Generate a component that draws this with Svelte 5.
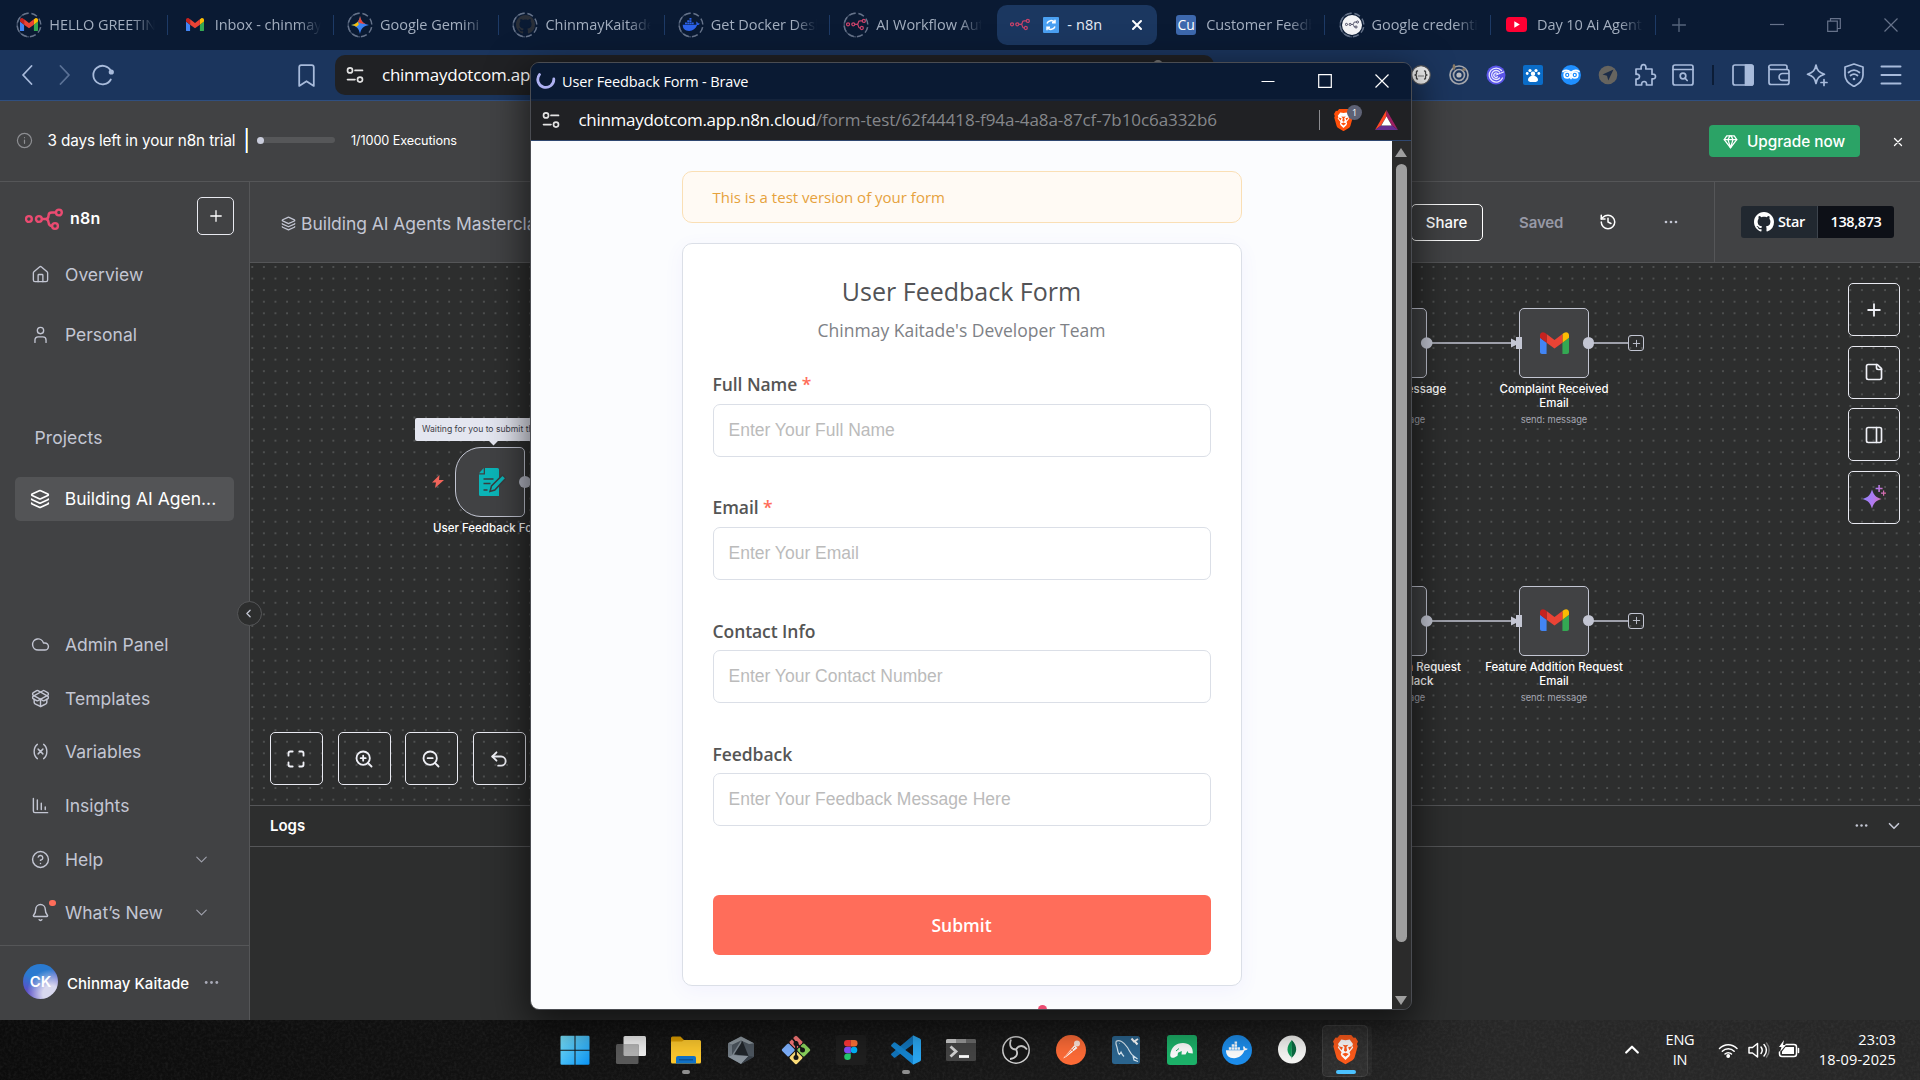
<script>
  const icons = {
    house: '<path d="M15 21v-8a1 1 0 0 0-1-1h-4a1 1 0 0 0-1 1v8"/><path d="M3 10a2 2 0 0 1 .709-1.528l7-5.999a2 2 0 0 1 2.582 0l7 5.999A2 2 0 0 1 21 10v9a2 2 0 0 1-2 2H5a2 2 0 0 1-2-2z"/>',
    user: '<path d="M19 22v-3a4 4 0 0 0-4-4H9a4 4 0 0 0-4 4v3"/><circle cx="12" cy="7" r="4"/>',
    layers: '<path d="M12.83 2.18a2 2 0 0 0-1.66 0L2.6 6.08a1 1 0 0 0 0 1.83l8.58 3.91a2 2 0 0 0 1.66 0l8.58-3.9a1 1 0 0 0 0-1.83z"/><path d="M2 12a1 1 0 0 0 .58.91l8.6 3.91a2 2 0 0 0 1.65 0l8.58-3.9A1 1 0 0 0 22 12"/><path d="M2 17a1 1 0 0 0 .58.91l8.6 3.91a2 2 0 0 0 1.65 0l8.58-3.9A1 1 0 0 0 22 17"/>',
    cloud: '<path d="M17.5 19H9a7 7 0 1 1 6.71-9h1.79a4.5 4.5 0 1 1 0 9Z"/>',
    box: '<path d="M12 22v-9"/><path d="M15.17 2.21a1.67 1.67 0 0 1 1.63 0L21 4.57a1.93 1.93 0 0 1 0 3.36L8.82 14.79a1.655 1.655 0 0 1-1.64 0L3 12.43a1.93 1.93 0 0 1 0-3.36z"/><path d="M20 13v3.87a2.06 2.06 0 0 1-1.11 1.83l-6 3.08a1.93 1.93 0 0 1-1.78 0l-6-3.08A2.06 2.06 0 0 1 4 16.87V13"/><path d="M21 12.43a1.93 1.93 0 0 0 0-3.36L8.83 2.2a1.64 1.64 0 0 0-1.63 0L3 4.57a1.93 1.93 0 0 0 0 3.36l12.18 6.86a1.636 1.636 0 0 0 1.63 0z"/>',
    variable: '<path d="M8 21s-4-3-4-9 4-9 4-9M16 3s4 3 4 9-4 9-4 9M15 9l-6 6M9 9l6 6"/>',
    chart: '<path d="M13 17V9M18 17v-3M3 3v16a2 2 0 0 0 2 2h16M8 17V5"/>',
    help: '<circle cx="12" cy="12" r="10"/><path d="M9.09 9a3 3 0 0 1 5.83 1c0 2-3 3-3 3M12 17h.01"/>',
    bell: '<path d="M10.268 21a2 2 0 0 0 3.464 0"/><path d="M3.262 15.326A1 1 0 0 0 4 17h16a1 1 0 0 0 .74-1.673C19.41 13.956 18 12.499 18 8A6 6 0 0 0 6 8c0 4.499-1.411 5.956-2.738 7.326"/>',
    down: '<path d="m6 9 6 6 6-6"/>',
    up: '<path d="m5 15 7-7 7 7"/>',
    left: '<path d="m15 18-6-6 6-6"/>',
    info: '<circle cx="12" cy="12" r="10"/><path d="M12 16v-4.5M12 8h.01"/>',
    plus: '<path d="M5 12h14M12 5v14"/>',
    close: '<path d="M18 6 6 18M6 6l12 12"/>',
    fit: '<path d="M8 3H5a2 2 0 0 0-2 2v3M21 8V5a2 2 0 0 0-2-2h-3M3 16v3a2 2 0 0 0 2 2h3M16 21h3a2 2 0 0 0 2-2v-3"/>',
    zoomIn: '<circle cx="11" cy="11" r="8"/><path d="m21 21-4.35-4.35M11 8v6M8 11h6"/>',
    zoomOut: '<circle cx="11" cy="11" r="8"/><path d="m21 21-4.35-4.35M8 11h6"/>',
    undo: '<path d="M9 14 4 9l5-5"/><path d="M4 9h10.5a5.5 5.5 0 0 1 0 11H11"/>',
    note: '<path d="M16 3H5a2 2 0 0 0-2 2v14a2 2 0 0 0 2 2h14a2 2 0 0 0 2-2V8Z"/><path d="M15 3v4a2 2 0 0 0 2 2h4"/>',
    panel: '<rect x="3" y="3" width="18" height="18" rx="2"/><path d="M15 3v18"/>',
    history: '<path d="M3 12a9 9 0 1 0 9-9 9.75 9.75 0 0 0-6.74 2.74L3 8"/><path d="M3 3v5h5M12 7v5l4 2"/>',
    gem: '<path d="M6 3h12l4 6-10 13L2 9Z"/><path d="M11 3 8 9l4 13 4-13-3-6M2 9h20"/>',
    dots: '<g fill="currentColor" stroke="none"><circle cx="4.5" cy="12" r="2"/><circle cx="12" cy="12" r="2"/><circle cx="19.5" cy="12" r="2"/></g>',
    bookmark: '<path d="m19 22-7-4.500-7 4.500V4a2 2 0 0 1 2-2h10a2 2 0 0 1 2 2z"/>',
    tune: '<circle cx="6" cy="6.500" r="3"/><path d="M12 6.500h9M3 17.500h9"/><circle cx="18" cy="17.500" r="3"/>'
  };

  const tabs = [
    { title: 'HELLO GREETINGS', icon: 'gmail', ring: true },
    { title: 'Inbox - chinmaykaitade', icon: 'gmail' },
    { title: 'Google Gemini', icon: 'gemini', ring: true },
    { title: 'ChinmayKaitade/Docker', icon: 'github', ring: true },
    { title: 'Get Docker Desktop', icon: 'docker', ring: true },
    { title: 'AI Workflow Automation', icon: 'n8n', ring: true, last: true },
    { title: '- n8n', icon: 'n8n', active: true },
    { title: 'Customer Feedback', icon: 'cu' },
    { title: 'Google credentials', icon: 'n8nwhite', ring: true },
    { title: 'Day 10 Ai Agents', icon: 'youtube' }
  ];

  const mainNav = [
    { label: 'Overview', icon: 'house' },
    { label: 'Personal', icon: 'user' }
  ];
  const footNav = [
    { label: 'Admin Panel', icon: 'cloud' },
    { label: 'Templates', icon: 'box' },
    { label: 'Variables', icon: 'variable' },
    { label: 'Insights', icon: 'chart' },
    { label: 'Help', icon: 'help', more: true },
    { label: 'What’s New', icon: 'bell', more: true, dot: true }
  ];

  const fields = [
    { label: 'Full Name', hint: 'Enter Your Full Name', required: true },
    { label: 'Email', hint: 'Enter Your Email', required: true },
    { label: 'Contact Info', hint: 'Enter Your Contact Number' },
    { label: 'Feedback', hint: 'Enter Your Feedback Message Here' }
  ];

  const extensions = ['braces', 'target', 'spiral', 'paw', 'owl', 'plane', 'puzzle', 'search', 'bar', 'sidebar', 'wallet', 'spark', 'vpn', 'menu'];

  const apps = [
    { icon: 'windows' }, { icon: 'taskview' }, { icon: 'explorer', open: true }, { icon: 'cube' },
    { icon: 'git' }, { icon: 'figma' }, { icon: 'vscode', open: true }, { icon: 'terminal' },
    { icon: 'obs' }, { icon: 'postman' }, { icon: 'mysql' }, { icon: 'manatee' },
    { icon: 'docker' }, { icon: 'mongo' }, { icon: 'brave', current: true }
  ];
</script>

{#snippet icon(name, size = 20, stroke = 2)}
  <svg width={size} height={size} viewBox="0 0 24 24" fill="none" stroke="currentColor" stroke-width={stroke} stroke-linecap="round" stroke-linejoin="round">{@html icons[name]}</svg>
{/snippet}

{#snippet gmail(w)}
  <svg width={w} height={w * 0.76} viewBox="52 42 88 66">
    <path fill="#4285f4" d="M58 108h14V74L52 59v43c0 3.320 2.690 6 6 6" />
    <path fill="#34a853" d="M120 108h14c3.320 0 6-2.690 6-6V59l-20 15" />
    <path fill="#fbbc04" d="M120 48v26l20-15v-8c0-7.420-8.470-11.650-14.400-7.200" />
    <path fill="#ea4335" d="M72 74V48l24 18 24-18v26L96 92" />
    <path fill="#c5221f" d="M52 51v8l20 15V48l-5.600-4.200c-5.940-4.450-14.400-.22-14.400 7.200" />
  </svg>
{/snippet}

{#snippet n8n(w, color = '#ea4b71')}
  <svg width={w} height={w * 0.632} viewBox="0 0 38 24" fill="none" stroke={color} stroke-width="2.400">
    <circle cx="3.900" cy="12" r="2.900" /><circle cx="13.900" cy="12" r="2.900" />
    <circle cx="33.900" cy="5.500" r="2.900" /><circle cx="30" cy="19" r="2.900" />
    <path d="M16.800 12h3.700c2.600 0 3-1.500 3-3.300s.9-3.200 3.300-3.200h4.200M20.500 12c2.400 0 2.900 1.400 3.100 3.600s1 3.400 3.500 3.400" />
  </svg>
{/snippet}

{#snippet github(size)}
  <svg width={size} height={size} viewBox="0 0 16 16" fill="currentColor"><path d="M8 0C3.580 0 0 3.580 0 8c0 3.540 2.290 6.530 5.470 7.590.4.070.55-.17.55-.38 0-.19-.01-.82-.01-1.490-2.010.37-2.530-.49-2.690-.94-.09-.23-.48-.94-.82-1.130-.28-.15-.68-.52-.01-.53.63-.01 1.080.58 1.230.82.72 1.210 1.870.87 2.330.66.070-.52.28-.87.51-1.070-1.780-.2-3.640-.89-3.640-3.950 0-.87.31-1.590.82-2.150-.08-.2-.36-1.020.08-2.120 0 0 .67-.21 2.200.82.64-.18 1.320-.27 2-.27s1.360.09 2 .27c1.530-1.040 2.200-.82 2.200-.82.44 1.100.16 1.920.08 2.120.51.56.82 1.270.82 2.150 0 3.070-1.870 3.750-3.650 3.950.29.25.54.73.54 1.480 0 1.070-.01 1.930-.01 2.200 0 .21.15.46.55.38A8.010 8.010 0 0 0 16 8c0-4.420-3.580-8-8-8z" /></svg>
{/snippet}

{#snippet whale(w, color)}
  <svg width={w} height={w} viewBox="0 0 24 24" fill={color}>
    <path d="M4 8.500h2.600v2.600H4zM7 8.500h2.600v2.600H7zM10 8.500h2.600v2.600H10zM7 5.500h2.600v2.500H7zM10 5.500h2.600v2.500H10zM13 8.500h2.600v2.600H13zM10 2.500h2.600V5H10z" />
    <path d="M1 11.700h16.300c1.100 0 1.900-.4 2.200-.8-.8-1.200-.7-2.500 0-3.500 1 .6 1.500 1.500 1.600 2.300.9-.1 2 .1 2.600.6-.6 1.200-1.900 1.800-3.400 1.800-2 5-5.700 7.900-10.800 7.900C4 20 1 17 1 11.700z" />
  </svg>
{/snippet}

{#snippet lion(w)}
  <svg width={w} height={w * 1.17} viewBox="0 0 24 28">
    <path fill="#ff4f0a" d="M6.500 0h11l2.300 2.600 1.800-.3 2.400 3.900-1 2.500.7 2-3 10.800c-.4 1.200-1.100 2-2 2.600L12 28l-6.700-3.900c-.9-.6-1.600-1.400-2-2.600L.3 10.700l.7-2L0 6.200l2.400-3.900 1.800.3z" />
    <path fill="#fff" d="M8 4.300 12 5l4-.7 3.200 4.200-.7 1.700.9 1.800-3.600 4.400.8 2-.9 2L12 24l-3.700-3.600-.9-2 .8-2L4.600 12l.9-1.800-.7-1.700z" />
    <path fill="#ff4f0a" d="m5.300 10.800 4.200.9-1.300 2.800zM18.700 10.800l-4.200.9 1.300 2.800zM12 16l-1.500-1 .6-3.500-1.900-2.200 2.800.5 2.800-.5-1.900 2.200.6 3.500zM8.800 18.300l3.200-1.200 3.200 1.200L12 20.800z" />
  </svg>
{/snippet}

{#snippet favicon(name)}
  {#if name === 'gmail'}{@render gmail(18)}
  {:else if name === 'gemini'}
    <svg width="18" height="18" viewBox="0 0 24 24">
      <defs><linearGradient id="gem" x1="0" y1="0" x2="1" y2="1"><stop offset=".15" stop-color="#2fa84f" /><stop offset=".45" stop-color="#3a86f7" /><stop offset="1" stop-color="#3a78f2" /></linearGradient></defs>
      <path fill="url(#gem)" d="M12 0c1 7 5 11 12 12-7 1-11 5-12 12-1-7-5-11-12-12C7 11 11 7 12 0z" />
      <path fill="#ea4335" d="M12 0c1 5.500 3.500 9.300 8 11L12 9.500 9.300 7.600C10.700 5.600 11.600 3 12 0z" />
      <path fill="#fbbc04" d="M0 12c4-.6 7-2.200 9-4.500l1.500 4.200L7 14.200C5 13 3 12.400 0 12z" />
    </svg>
  {:else if name === 'github'}<span class="dim-git">{@render github(19)}</span>
  {:else if name === 'docker'}{@render whale(18, '#2c62ea')}
  {:else if name === 'n8n'}{@render n8n(20, '#c9426a')}
  {:else if name === 'n8nwhite'}<span class="white-disc">{@render n8n(14, '#3b3b55')}</span>
  {:else if name === 'cu'}<span class="cu">Cu</span>
  {:else if name === 'youtube'}
    <svg width="21" height="15" viewBox="0 0 21 15"><rect width="21" height="15" rx="3.500" fill="#ff0033" /><path d="m8.300 4.300 5.500 3.200-5.500 3.200z" fill="#fff" /></svg>
  {/if}
{/snippet}

{#snippet extension(name)}
  {#if name === 'bar'}<span class="ext-bar"></span>
  {:else}
    <svg width="24" height="24" viewBox="0 0 24 24" fill="none" stroke="#a8bbdb" stroke-width="1.700" stroke-linejoin="round" stroke-linecap="round">
      {#if name === 'braces'}
        <circle cx="12" cy="12" r="9.300" fill="#f4f4f4" stroke="#55565a" stroke-width="1.200" /><path stroke="#444" stroke-width="1.300" d="M8.500 8c-1.500 0-1 1.200-1 2.200S6.500 12 6 12c.5 0 1.500.8 1.500 1.800S7 16 8.500 16M15.500 8c1.500 0 1 1.200 1 2.200s1 1.800 1.500 1.800c-.5 0-1.500.8-1.500 1.800S17 16 15.500 16M10 13h.01M12 13h.01M14 13h.01" />
      {:else if name === 'target'}
        <circle cx="12" cy="12" r="9" stroke="#a4a6ac" /><circle cx="12" cy="12" r="5.500" stroke="#a4a6ac" /><circle cx="12" cy="12" r="2.600" fill="#b9bbc0" stroke="none" /><path stroke="#8a7b66" stroke-width="2.500" d="M7 2.500v3M16.500 6.500h1" />
      {:else if name === 'spiral'}
        <circle cx="12" cy="12" r="9.500" fill="#5a55e8" stroke="none" /><path stroke="#e6e6ff" stroke-width="1.300" d="M17.500 7.500A7 7 0 1 0 18.500 15M15.500 9A4.500 4.500 0 1 0 15.500 15M13.500 10.500a2.200 2.200 0 1 0 0 3.300M12 12l7.500-3" />
      {:else if name === 'paw'}
        <rect x="2" y="2" width="20" height="20" rx="2" fill="#0a6cc8" stroke="none" /><g fill="#fff" stroke="none"><circle cx="9" cy="7.500" r="1.600" /><circle cx="15" cy="7.500" r="1.600" /><circle cx="6.200" cy="10.500" r="1.400" /><circle cx="17.800" cy="10.500" r="1.400" /><circle cx="12" cy="10.800" r="2.200" /><path d="M12 12.800c3 0 5 2 5 4 0 2.600-3 2.200-5 2.200s-5 .4-5-2.200c0-2 2-4 5-4z" /></g>
      {:else if name === 'owl'}
        <circle cx="12" cy="12" r="10" fill="#1f8fff" stroke="none" /><g stroke="#fff"><circle cx="8.200" cy="12" r="3" /><circle cx="15.800" cy="12" r="3" /><path d="M4 8.500c3-2 5.500-1 8 1 2.500-2 5-3 8-1M12 12v3.500" /></g><path fill="#fff" stroke="none" d="M7.500 11h1.500v2H7.500zM15 11h1.500v2H15z" />
      {:else if name === 'plane'}
        <circle cx="12" cy="12" r="9.300" fill="#66645f" stroke="none" /><path fill="#1c2c48" stroke="none" d="M17.500 6.500 6.500 11.500l4.500 1.200 1.300 4.800z" />
      {:else if name === 'puzzle'}
        <path d="M3 6h5.200c-.6-3 .6-4.300 2.300-4.300S13.400 3 12.800 6H19v5.200c2.500-.3 3.500.8 3.500 2.300S21.500 16.200 19 15.800V22h-5.500c.3-2.500-.8-3.500-2.300-3.500S8.300 19.500 8.700 22H3v-6c2.300.3 3.500-.8 3.500-2.400S5.300 10.900 3 11.300z" />
      {:else if name === 'search'}
        <rect x="2" y="2" width="20" height="20" rx="2" /><path d="M2 6.500h20" /><circle cx="12" cy="13" r="2.800" /><path d="m14 15.200 2.200 2.300" />
      {:else if name === 'sidebar'}
        <rect x="2" y="2" width="20" height="20" rx="2" /><path fill="#a8bbdb" d="M14.500 2H20a2 2 0 0 1 2 2v16a2 2 0 0 1-2 2h-5.500z" />
      {:else if name === 'wallet'}
        <path d="M20 6.500V4a2 2 0 0 0-2-2H4a2 2 0 0 0 0 4.500h16a2 2 0 0 1 2 2v11a2 2 0 0 1-2 2H4a2 2 0 0 1-2-2V4M22 10.500h-6.500a3.400 3.400 0 0 0 0 6.800H22z" />
      {:else if name === 'spark'}
        <path d="M11 2c1 5.500 3 7.500 8.500 9.200C14 13 12 15 11 20.500 10 15 8 13 2.500 11.200 8 9.500 10 7.500 11 2zM19 16.500v6M16 19.500h6" />
      {:else if name === 'vpn'}
        <path d="m12 1 9 3v8c0 5-4 9-9 11.500C7 21 3 17 3 12V4z" /><path d="M6.500 9.500c3.500-3 7.500-3 11 0M8.500 12.500c2.200-1.800 4.800-1.800 7 0" /><circle cx="12" cy="16" r="1.300" fill="#a8bbdb" stroke="none" />
      {:else}
        <path stroke-width="2" d="M2.500 3.500h19M2.500 12h19M2.500 20.500h19" />
      {/if}
    </svg>
  {/if}
{/snippet}

{#snippet appIcon(name)}
  <svg width="30" height="30" viewBox="0 0 30 30">
    {#if name === 'windows'}
      <defs><linearGradient id="win" x1="0" y1="0" x2="1" y2="1"><stop offset="0" stop-color="#7fe8ff" /><stop offset="1" stop-color="#0a94f5" /></linearGradient></defs>
      <path fill="url(#win)" d="M.5 2a1.200 1.200 0 0 1 1.200-1.200H14.500v14H.5zM15.500.8h12.800A1.200 1.200 0 0 1 29.500 2v12.800h-14zM.5 15.800h14v14H1.700A1.200 1.200 0 0 1 .5 28.600zM15.500 15.800h14v12.800a1.200 1.200 0 0 1-1.200 1.200H15.500z" />
    {:else if name === 'taskview'}
      <rect x="7.500" y="1" width="22.500" height="20" rx="1.500" fill="#f2f2f2" /><rect x="0" y="9" width="22.500" height="20" rx="1.500" fill="#5a5a5a" /><path fill="#b5b5b5" d="M7.500 9h15v12h-13.500a1.500 1.500 0 0 1-1.500-1.500z" />
    {:else if name === 'explorer'}
      <path fill="#e2a100" d="M0 3a1.500 1.500 0 0 1 1.500-1.500h8L13 5h16v10H0z" /><path fill="#ffca2e" d="M0 6.500h11L13 5h15.500A1.500 1.500 0 0 1 30 6.500v20.500a1.500 1.500 0 0 1-1.500 1.500h-27A1.500 1.500 0 0 1 0 27z" /><path fill="#1173c9" d="M5 28.500v-5.500a2 2 0 0 1 2-2h16a2 2 0 0 1 2 2v5.500z" /><path d="M8 24.800h14" stroke="#0a4d8f" stroke-width="1.200" />
    {:else if name === 'cube'}
      <path fill="#4d565f" d="M15 1.500 28 8.200v13.500L15 29 2 21.700V8.200z" /><path fill="#8e989f" d="M15 1.500 2 8.200l4 1.500L15 5.500l8 3.500 5-.8z" /><path fill="#737d86" d="M2 8.200 6 9.700V20l-4 1.700z" /><path fill="#7f8991" d="M15 5.500 6 20l3 1 8-3z" /><path fill="#20252a" d="m16.500 6 6 15L8 19.500z" /><path fill="#8a949d" d="m2 21.700 4-1.700 16.500 1L15 29z" /><path fill="#39414a" d="m22.500 21 5.500.7L15 29z" />
    {:else if name === 'git'}
      <g transform="rotate(45 15 15)"><rect x="4.500" y="4.500" width="10" height="10" rx="1.500" fill="#ff7b7b" /><rect x="15.500" y="4.500" width="10" height="10" rx="1.500" fill="#8bd45c" /><rect x="4.500" y="15.500" width="10" height="10" rx="1.500" fill="#7fb2ff" /><rect x="15.500" y="15.500" width="10" height="10" rx="1.500" fill="#ffe07a" /></g>
      <path stroke="#161616" stroke-width="1.800" fill="none" d="M15 6v17M11 3l4 5 6 6" /><circle cx="15" cy="22.500" r="2.500" fill="#161616" /><circle cx="21.500" cy="15" r="2.500" fill="#161616" /><circle cx="15" cy="8.500" r="2.500" fill="#161616" />
    {:else if name === 'figma'}
      <rect width="30" height="30" rx="3" fill="#1f1f1f" /><path fill="#ff3737" d="M14.800 5H11.300a3.200 3.200 0 0 0 0 6.500h3.500z" /><path fill="#ff7237" d="M14.800 5h3.500a3.200 3.200 0 0 1 0 6.500h-3.500z" /><path fill="#874fff" d="M14.800 11.700h-3.500a3.200 3.200 0 0 0 0 6.500h3.500z" /><circle cx="18" cy="15" r="3.300" fill="#00b6ff" /><path fill="#24cb71" d="M14.800 18.400h-3.500a3.300 3.300 0 1 0 3.500 3.300z" />
    {:else if name === 'vscode'}
      <path fill="#1276bd" d="M22 .5v8.700L4.300 22.400a1.200 1.200 0 0 1-1.500 0L.5 20.300a1.200 1.200 0 0 1 0-1.700z" /><path fill="#1585d0" d="M22 29.500v-8.700L4.300 7.600a1.200 1.200 0 0 0-1.500 0L.5 9.700a1.200 1.200 0 0 0 0 1.700z" /><path fill="#2aa7f2" d="m22 .3 6.800 3.200a2 2 0 0 1 1.200 1.800v19.400a2 2 0 0 1-1.200 1.800L22 29.700z" />
    {:else if name === 'terminal'}
      <rect y="4" width="30" height="22" rx="1.500" fill="#454545" /><path fill="#cfcfcf" d="M1.500 4H10v4H0V5.500A1.500 1.500 0 0 1 1.500 4z" /><path fill="#999" d="M10 4h10v4H10z" /><path fill="#6c6c6c" d="M20 4h8.500A1.500 1.500 0 0 1 30 5.500V8H20z" /><path d="m4.500 11.500 5.500 5-5.500 5" fill="none" stroke="#d5d5d5" stroke-width="2.800" /><path d="M13 21.500h10" stroke="#fff" stroke-width="2.800" />
    {:else if name === 'obs'}
      <circle cx="15" cy="15" r="13.200" fill="#161616" stroke="#d2d2d2" stroke-width="1.500" /><path d="M15 14.500c-5.500 0-7-4.500-5-10M15 14.500c2.500-4.800 7.500-4.500 11 0M15 14.500c3 5-.5 9-6 9.500" fill="none" stroke="#d2d2d2" stroke-width="1.800" />
    {:else if name === 'postman'}
      <circle cx="15" cy="15" r="15" fill="#ff6c37" /><path d="M7 23.500 18.500 10l3 3L10 22z" fill="#fff" /><circle cx="21" cy="8.500" r="3" fill="#ffe6dc" /><path d="m9 21.500 10-9.500" stroke="#ff6c37" stroke-width=".9" /><path d="m14.500 14 3.500 3" stroke="#ff6c37" stroke-width=".9" />
    {:else if name === 'mysql'}
      <rect x="1" y="1" width="28" height="28" rx="2.500" fill="#2c6690" /><path d="M5 6.500C8 4 13 7 16.500 12.500c2 3.200 3 6.500 6 8.500l4 3M5 6.500c-.5 3 1 4.500 1.500 8 .5 2 .5 4 2 5l1.500-2.500c1 2.500 2 3.500 3 4.500M22 21l1 4 4 1.500M8.500 8.500h.5" fill="none" stroke="#d8e8f2" stroke-width="1.200" /><path d="m20.500 3.500 2.500 3 4-2.500M23.500 6l3 3.500" stroke="#fff" stroke-width="2" fill="none" />
    {:else if name === 'manatee'}
      <rect width="30" height="30" rx="3" fill="#1db36a" /><path fill="#fff" d="M3.200 20C4 12 9 8 16 8c6 0 10.300 4 9.800 10.500l-4.300-.5-1-2-2 3.500h-4l.3-3.500-3.800 1.800-.5 3-3.500 1.900c-1.700.5-3.900-.3-3.800-2.700z" /><path d="m9 16 3-2.500" stroke="#1db36a" />
    {:else if name === 'docker'}
      <circle cx="15" cy="15" r="15" fill="#1d8fee" />
    {:else if name === 'mongo'}
      <circle cx="15" cy="14.500" r="14" fill="#f7f7f5" /><path fill="#0f9d58" d="M15 5c-6.500 7-5.500 13-.3 17.500z" /><path fill="#0a6b42" d="M14.800 5c6.500 7 5.200 13 .2 17.500l-.3 2z" />
    {/if}
  </svg>
  {#if name === 'docker'}<span class="overlay">{@render whale(23, '#fff')}</span>{/if}
{/snippet}

{#snippet flowNode(row, name1, name2, prev1, prev2)}
  <div class="flow" class:second={row === 2}>
    <div class="box cut"></div>
    <div class="label prev"><b>{prev1}</b><b>{prev2}</b><small>send: message</small></div>
    <svg class="wire" width="230" height="20" viewBox="0 0 230 20">
      <path d="M16 10h87M178 10h40" stroke="#c3c6d3" stroke-width="1.600" />
      <path d="M101 5.500 110 10l-9 4.500z" fill="#c3c6d3" />
      <circle cx="16.700" cy="10" r="5.800" fill="#c3c6d3" />
    </svg>
    <div class="box">{@render gmail(29)}</div>
    <span class="port"></span>
    <span class="add">{@render icon('plus', 11, 2)}</span>
    <span class="knob"></span>
    <div class="label"><b>{name1}</b><b>{name2}</b><small>send: message</small></div>
  </div>
{/snippet}

<div class="screen">
  <div class="tabbar">
    {#each tabs as t}
      <div class="tab" class:active={t.active} class:sep={!t.active && !t.last}>
        <span class="fav" class:ring={t.ring}>
          {#if t.ring}<svg class="dash" width="26" height="26" viewBox="0 0 26 26"><circle cx="13" cy="13" r="11.800" fill="none" stroke="#66738a" stroke-width="1.500" stroke-dasharray="6.200 3.070" transform="rotate(10 13 13)" /><path d="M13 1.200A11.800 11.800 0 0 0 13 24.800" fill="none" stroke="#66738a" stroke-width="1.300" opacity=".6" /></svg>{/if}
          {@render favicon(t.icon)}
        </span>
        {#if t.active}
          <svg class="sync" width="16" height="16" viewBox="0 0 16 16"><rect width="16" height="16" rx="1" fill="#4aa0f2" /><path d="M4 6.500A4.200 4.200 0 0 1 11.500 5.500M12 9.500A4.200 4.200 0 0 1 4.500 10.500M12 2.800v3H9M4 13.200v-3h3" stroke="#fff" stroke-width="1.500" fill="none" /></svg>
          <span class="now">{t.title}</span>
          <span class="x">{@render icon('close', 16, 3)}</span>
        {:else}
          <span class="title">{t.title}</span>
        {/if}
      </div>
    {/each}
    <span class="newtab">{@render icon('plus', 22, 1.5)}</span>
    <div class="winctl">
      <svg width="14" height="14" viewBox="0 0 14 14"><path d="M0 6.500h14" /></svg>
      <svg width="14" height="14" viewBox="0 0 14 14"><path d="M.7 3.200h9.600v10.100H.7zM3.500 3V.7h9.800v9.800h-2.500" /></svg>
      <svg width="14" height="14" viewBox="0 0 14 14"><path d="m.5.5 13 13M13.500.5l-13 13" /></svg>
    </div>
  </div>

  <div class="toolbar">
    <div class="nav">
      <svg width="12" height="20" viewBox="0 0 12 20"><path d="M10.500 1 2 10l8.500 9" /></svg>
      <svg class="off" width="12" height="20" viewBox="0 0 12 20"><path d="m1.500 1 8.500 9-8.500 9" /></svg>
      <svg width="24" height="22" viewBox="0 0 24 22"><path d="M19.800 15.500A9.300 9.300 0 1 1 20 7" /><circle cx="20.300" cy="8" r="1.700" fill="#a8bbdb" /></svg>
    </div>
    <span class="mark">{@render icon('bookmark', 25, 1.7)}</span>
    <div class="omnibox">
      {@render icon('tune', 20, 2)}
      <span class="url">chinmaydotcom.app</span>
      <span class="bubble"></span>
    </div>
    <div class="exts">
      {#each extensions as e}<span class="ext">{@render extension(e)}</span>{/each}
    </div>
  </div>

  <div class="app">
    <div class="trial">
      <span class="info">{@render icon('info', 17, 1.7)}</span>
      <span class="days">3 days left in your n8n trial</span>
      <span class="caret"></span>
      <span class="meter"><i></i></span>
      <span class="exec">1/1000 Executions</span>
      <button class="upgrade">{@render icon('gem', 15, 2)}Upgrade now</button>
      <span class="dismiss">{@render icon('close', 14, 2.2)}</span>
    </div>

    <div class="body">
      <aside>
        <div class="brand"><span class="logo">{@render n8n(38)}<b>n8n</b></span><button>{@render icon('plus', 18, 1.7)}</button></div>
        <nav class="top">
          {#each mainNav as item}<div class="item">{@render icon(item.icon, 19, 1.7)}<span>{item.label}</span></div>{/each}
        </nav>
        <div class="heading">Projects</div>
        <div class="item chosen">{@render icon('layers', 20, 2)}<span>Building AI Agen...</span></div>
        <nav class="foot">
          {#each footNav as item}
            <div class="item">
              {@render icon(item.icon, 19, 1.8)}<span>{item.label}</span>
              {#if item.more}<em>{@render icon('down', 19, 1.4)}</em>{/if}
              {#if item.dot}<i class="alert"></i>{/if}
            </div>
          {/each}
        </nav>
        <div class="account"><span class="avatar">CK</span><b>Chinmay Kaitade</b><em>{@render icon('dots', 17)}</em></div>
        <span class="collapse">{@render icon('left', 13, 2.4)}</span>
      </aside>

      <main>
        <header>
          <span class="crumb">{@render icon('layers', 15, 2)}Building AI Agents Masterclass</span>
          <div class="actions">
            <button class="share">Share</button>
            <span class="saved">Saved</span>
            <span class="hist">{@render icon('history', 18, 2)}</span>
            <span class="more">{@render icon('dots', 16)}</span>
          </div>
          <div class="stars">
            <div class="badge"><span class="star">{@render github(20)}Star</span><span class="count">138,873</span></div>
          </div>
        </header>

        <div class="canvas">
          <svg class="dots" width="1671" height="542">
            <defs><pattern id="grid" width="11.580" height="11.580" patternUnits="userSpaceOnUse" x="1.300" y="3"><circle cx="1" cy="1" r=".75" fill="#7d7f7e" /></pattern></defs>
            <rect width="1671" height="542" fill="url(#grid)" />
          </svg>
          <div class="tip">Waiting for you to submit the form</div>
          <div class="trigger">
            <svg width="27" height="28" viewBox="0 0 27 28">
              <path fill="#0bb5b8" d="M6 0h12.500a1.500 1.500 0 0 1 1.500 1.500V28H1.500A1.500 1.500 0 0 1 0 26.500V6.500h6z" /><path fill="#0bb5b8" d="M4.700 0v5.200H0z" />
              <path d="M4.500 11h10M4.500 15.500h7M4.500 22h4" stroke="#3a3c3e" stroke-width="1.600" />
              <path d="m11 23.500 1.500-5.500L23.500 7l3.300 3.300L15.800 22z" fill="#0bb5b8" stroke="#3a3c3e" stroke-width="1.500" />
            </svg>
          </div>
          <span class="bolt"><svg width="12" height="13" viewBox="0 0 12 13"><path fill="#f1645a" d="M7.500 0 0 7.500h4L3 13l9-8H7z" /></svg></span>
          <span class="trigger-port"></span>
          <div class="trigger-name">User Feedback Form</div>

          {@render flowNode(1, 'Complaint Received', 'Email', 'Complaint Message', 'Slack')}
          {@render flowNode(2, 'Feature Addition Request', 'Email', 'Feature Addition Request', 'Message Slack')}

          <div class="tools">
            {#each ['fit', 'zoomIn', 'zoomOut', 'undo'] as t}<button>{@render icon(t, 20, 2.2)}</button>{/each}
          </div>
          <div class="side">
            {#each ['plus', 'note', 'panel'] as t}<button>{@render icon(t, 20, t === 'plus' ? 2.2 : 2)}</button>{/each}
            <button>
              <svg width="24" height="24" viewBox="0 0 24 24">
                <defs><linearGradient id="ai" x1="0" x2="1" y1="0" y2=".3"><stop offset="0" stop-color="#8b86ff" /><stop offset=".6" stop-color="#b07af0" /><stop offset="1" stop-color="#e06aa0" /></linearGradient></defs>
                <path fill="url(#ai)" d="M10 4.500c2 6 3.500 7.500 9.500 9.500-6 2-7.500 3.500-9.500 9.500-2-6-3.500-7.500-9.500-9.500 6-2 7.500-3.500 9.500-9.500zM16.300 0h1.600v2.700h2.700v1.600h-2.700V7h-1.600V4.300h-2.700V2.700h2.700zM21 5.500h1.200v2h2v1.200h-2v2H21v-2h-2V7.500h2z" />
              </svg>
            </button>
          </div>
        </div>

        <div class="logs"><b>Logs</b><span>{@render icon('dots', 15)}</span><span>{@render icon('down', 18, 2.2)}</span></div>
      </main>
    </div>
  </div>

  <div class="taskbar">
    <svg class="grain" width="1920" height="60"><filter id="n"><feTurbulence type="fractalNoise" baseFrequency=".35" numOctaves="2" seed="4" /><feColorMatrix values="0 0 0 0 1  0 0 0 0 1  0 0 0 0 1  .5 .3 0 0 -.32" /></filter><rect width="1920" height="60" filter="url(#n)" /></svg>
    <div class="apps">
      {#each apps as a}
        <span class="appcell" class:current={a.current} class:open={a.open}>
          {#if a.icon === 'brave'}{@render lion(25)}{:else}{@render appIcon(a.icon)}{/if}
        </span>
      {/each}
    </div>
    <div class="tray">
      <span class="chev">{@render icon('up', 20, 2.6)}</span>
      <span class="lang">ENG<br />IN</span>
      <svg class="sig" width="82" height="20" viewBox="0 0 82 20" fill="none" stroke="#fff" stroke-width="1.500" stroke-linecap="round" stroke-linejoin="round">
        <path d="M1.500 8.500c5-5 12.500-5 17.500 0M4.300 11.300c3.400-3.400 8.500-3.400 11.900 0M7 14c1.800-1.800 4.700-1.800 6.500 0" /><circle cx="10.200" cy="16" r="1.200" fill="#fff" />
        <path d="M31 7.500v5.500h3.500l5 4V3.500l-5 4zM43 7c1.500 2 1.500 4.500 0 6.500M46 4.500c3 3.500 3 8 0 11.500" /><path d="M48.500 3c3.500 4 3.500 10 0 14" opacity=".35" />
        <path d="M68 4.500h8a2.500 2.500 0 0 1 2.500 2.500v7a2.500 2.500 0 0 1-2.500 2.500H64a2.500 2.500 0 0 1-2.500-2.500v-2M80.500 8.500v4" /><path fill="#fff" stroke="none" d="M67.500 7H76v7H64v-2.500zM66 0l-5 7h2.500L62 12l6-7h-3z" />
      </svg>
      <span class="clock">23:03<br />18-09-2025</span>
    </div>
  </div>

  <div class="window">
    <div class="caption">
      <svg class="spin" width="20" height="20" viewBox="0 0 20 20"><path d="M3.500 3.500A8 8 0 1 0 17.800 8" fill="none" stroke="#aeb1f2" stroke-width="2.800" stroke-linecap="round" /></svg>
      <span class="name">User Feedback Form - Brave</span>
      <div class="ctl">
        <svg width="14" height="14" viewBox="0 0 14 14"><path d="M.5 7.500h13" /></svg>
        <svg width="14" height="14" viewBox="0 0 14 14"><path d="M.7.7h12.600v12.600H.7z" /></svg>
        <svg width="14" height="14" viewBox="0 0 14 14"><path d="m.5.5 13 13M13.500.5l-13 13" /></svg>
      </div>
    </div>
    <div class="address">
      {@render icon('tune', 20, 2)}
      <span class="full">chinmaydotcom.app.n8n.cloud<i>/form-test/62f44418-f94a-4a8a-87cf-7b10c6a332b6</i></span>
      <span class="bar"></span>
      <span class="shield">{@render lion(19)}<b>1</b></span>
      <svg width="23" height="20" viewBox="0 0 23 20"><path fill="#ff4724" d="M11.500 0v6.500L6 15.500 0 20z" /><path fill="#9e1f63" d="M11.500 0 23 20l-6-4.500-5.500-9z" /><path fill="#662d91" d="M0 20h23l-6-4.500H6z" /><path fill="#fff" d="m11.500 6.500 5.200 9H6.300z" /></svg>
    </div>
    <div class="view">
      <div class="page">
        <div class="test">This is a test version of your form</div>
        <div class="card">
          <h1>User Feedback Form</h1>
          <p>Chinmay Kaitade's Developer Team</p>
          {#each fields as f}
            <div class="field"><label for={f.label} class:plain={!f.required}>{f.label}{#if f.required}<span>{' *'}</span>{/if}</label><input id={f.label} placeholder={f.hint} /></div>
          {/each}
          <button>Submit</button>
        </div>
        <span class="pink"></span>
      </div>
      <div class="scroll"><i class="up"></i><i class="thumb"></i><i class="dn"></i></div>
    </div>
  </div>
</div>

<style>
  :global(body) { margin: 0; background: #000; overflow: hidden; }
  * { box-sizing: border-box; }
  svg { display: block; flex: none; }
  button { font: inherit; padding: 0; background: none; border: 0; color: inherit; }
  .screen { position: relative; width: 1920px; height: 1080px; overflow: hidden; display: flex; flex-direction: column; font-family: Inter, sans-serif; white-space: nowrap; }

  /* browser chrome */
  .tabbar { height: 50px; flex: none; background: #0a1a33; display: flex; align-items: center; padding-left: 3px; font: 14.500px "Open Sans", sans-serif; letter-spacing: -.05px; color: #a3aebf; }
  .tab { width: 165.400px; flex: none; height: 40px; display: flex; align-items: center; position: relative; padding: 0 0 1px 13.300px; }
  .tab.sep::after { content: ""; position: absolute; right: 0; top: 10px; width: 1px; height: 20px; background: #1d3a66; }
  .fav { width: 26px; height: 26px; flex: none; display: flex; align-items: center; justify-content: center; position: relative; }
  .dash { position: absolute; inset: 0; }
  .dim-git { color: #2a2f38; }
  .white-disc { width: 20px; height: 20px; border-radius: 50%; background: #f3f3f6; display: flex; align-items: center; justify-content: center; }
  .cu { width: 20px; height: 20px; border-radius: 3px; background: #3d68ad; color: #fff; font: 14px/20px "Open Sans", sans-serif; text-align: center; }
  .title { margin-left: 7px; width: 106px; overflow: hidden; mask-image: linear-gradient(90deg, #000 78%, transparent); }
  .tab.active { background: #1b3760; border-radius: 10px; width: 159.500px; margin: 0 3px 0 2px; padding-left: 10px; color: #e6ebf5; }
  .sync { margin-left: 10px; }
  .now { margin-left: 8px; letter-spacing: .1px; }
  .x { margin-left: auto; margin-right: 12px; color: #fff; }
  .newtab { margin-left: 12px; color: #56647c; }
  .winctl { margin-left: auto; margin-right: 22px; display: flex; gap: 43px; }
  .winctl svg { fill: none; stroke: #66728a; stroke-width: 1.200; }
  .toolbar { height: 51px; flex: none; background: #1b355d; border-bottom: 1px solid #2f4f80; display: flex; align-items: center; }
  .nav { display: flex; align-items: center; margin-left: 21px; gap: 26px; width: 274px; }
  .nav svg { fill: none; stroke: #a8bbdb; stroke-width: 1.800; stroke-linecap: round; stroke-linejoin: round; }
  .nav svg:last-child { margin-left: -6px; }
  .nav .off { opacity: .45; }
  .mark { color: #a8bbdb; margin-left: -1px; width: 41px; }
  .omnibox { width: 879px; height: 40px; border-radius: 10px; background: #202124; display: flex; align-items: center; padding-left: 10px; color: #e3e3e3; position: relative; }
  .url { margin: -1px 0 0 17px; font: 17px "Open Sans", sans-serif; letter-spacing: -.25px; color: #fff; }
  .bubble { position: absolute; left: 818px; top: 5px; width: 10px; height: 10px; border-radius: 50%; background: #777; }
  .exts { display: flex; margin-left: 188.500px; }
  .ext { width: 37.350px; display: flex; justify-content: center; align-items: center; }
  .ext:nth-child(9) { width: 23.500px; justify-content: flex-end; padding-right: 11px; }
  .ext:nth-child(10) { width: 36px; }
  .ext-bar { width: 2px; height: 20px; background: #0b1c36; }

  /* n8n */
  .app { height: 919px; flex: none; display: flex; flex-direction: column; background: #414244; color: #c3c6d3; }
  .trial { height: 81px; flex: none; border-bottom: 1px solid #555658; display: flex; align-items: center; padding: 0 0 2px 15.500px; font-size: 15px; font-weight: 500; color: #fff; }
  .info { color: #8d8e92; }
  .days { margin-left: 15px; width: 187px; font-size: 15.300px; font-weight: 400; letter-spacing: -.14px; }
  .caret { margin-left: 10.500px; width: 3px; height: 25px; background: #fff; border-left: 1px solid #3e7fd8; border-right: 1px solid #e8cd6e; }
  .meter { margin-left: 9px; width: 78px; height: 6px; border-radius: 3px; background: #565759; position: relative; }
  .meter i { position: absolute; left: 0; top: -.5px; width: 7px; height: 7px; border-radius: 50%; background: #c9ccdb; }
  .exec { margin-left: 16px; font-size: 12.700px; font-weight: 400; letter-spacing: -.12px; }
  .upgrade { margin-left: auto; width: 151px; height: 32px; background: #2ba366; border-radius: 4px; display: flex; align-items: center; justify-content: center; gap: 9px; font-weight: 500; font-size: 15.300px; position: relative; top: 1px; }
  .dismiss { margin: 3px 15.500px 0 31px; }
  .body { flex: 1; display: flex; min-height: 0; }
  aside { width: 250px; flex: none; border-right: 1px solid #555658; display: flex; flex-direction: column; position: relative; font-size: 17.500px; }
  .brand { height: 53px; margin: 0 15px 0 25px; padding-top: 15px; display: flex; align-items: center; color: #fff; }
  .logo { display: flex; align-items: center; padding-top: 6px; }
  .brand b { margin: -1px 0 0 7px; font-size: 16px; font-weight: 600; letter-spacing: .2px; }
  .brand button { margin-left: auto; width: 37px; height: 38px; border: 1px solid #e8e9f0; border-radius: 5px; display: flex; align-items: center; justify-content: center; }
  .top { margin-top: 9px; }
  .item { height: 60px; display: flex; align-items: center; padding-left: 30.500px; position: relative; }
  .item span { position: relative; margin-left: 15.500px; letter-spacing: 0; }
  .heading { margin: 63px 0 0 34.500px; height: 22px; line-height: 22px; letter-spacing: .1px; }
  .chosen { margin: 28px 15px 0; height: 44px; flex: none; background: #535456; border-radius: 5px; padding: 0 0 1px 15px; color: #fff; }
  .chosen span { margin-left: 14.800px; letter-spacing: 0; }
  .foot { margin-top: 96.500px; }
  .foot .item { height: 53.700px; }
  .item em { position: absolute; left: 192px; color: #a0a2ad; }
  .alert { position: absolute; left: 49px; top: 14px; width: 6.500px; height: 6.500px; border-radius: 50%; background: #ff6d5a; }
  .account { margin-top: auto; height: 75px; flex: none; border-top: 1px solid #555658; display: flex; align-items: center; padding: 0 0 4px 23px; color: #fff; font-size: 15px; }
  .avatar { width: 35px; height: 35px; border-radius: 50%; display: flex; align-items: center; justify-content: center; font-weight: 600; background: radial-gradient(circle at 80% 85%, #d8d8ee 20%, transparent 60%), radial-gradient(circle at 40% 0, #2a7ad0 35%, transparent 70%), #5a4fc8; }
  .account b { margin: 4px 0 0 9px; font-weight: 500; letter-spacing: .05px; }
  .account em { margin: 3px 0 0 14px; color: #a9abb8; }
  .collapse { position: absolute; left: 237px; top: 419px; width: 25px; height: 25px; border-radius: 50%; background: #2d2e2e; border: 1px solid #555658; display: flex; align-items: center; justify-content: center; padding-right: 2px; z-index: 2; }
  main { flex: 1; min-width: 0; display: flex; flex-direction: column; background: #2d2e2e; }
  header { height: 81px; flex: none; background: #414244; border-bottom: 1px solid #555658; display: flex; align-items: center; padding-left: 31px; font-size: 15px; }
  .crumb { display: flex; align-items: center; gap: 5px; font-size: 17.500px; letter-spacing: -.05px; padding-top: 2px; }
  .actions { margin-left: auto; display: flex; align-items: center; height: 100%; width: 304.500px; border-right: 1px solid #555658; font-weight: 500; }
  .share { width: 72px; height: 37px; border: 1px solid #fff; border-radius: 5px; color: #fff; }
  .saved { margin-left: 36.500px; color: #9799a6; width: 45px; font-weight: 600; letter-spacing: -.1px; }
  .hist { margin-left: 35px; color: #fff; width: 18px; }
  .more { margin-left: 46px; }
  .stars { width: 205px; padding-left: 26px; }
  .badge { width: 153px; height: 32px; display: flex; border-radius: 3px; overflow: hidden; color: #fff; font: 600 14.500px/32px "Open Sans", sans-serif; letter-spacing: -.4px; }
  .star { width: 77px; background: #212830; border-right: 1px solid #3d444d; display: flex; align-items: center; gap: 4px; padding-left: 13px; }
  .count { flex: 1; background: #0d1017; text-align: center; }
  .canvas { height: 542px; flex: none; position: relative; overflow: hidden; }
  .dots { position: absolute; inset: 0; }
  .tip { position: absolute; left: 165px; top: 155px; width: 200px; height: 23px; background: #e4e6f0; border-radius: 2px; color: #3c3d48; font-size: 8.600px; line-height: 22px; padding-left: 7px; }
  .tip::after { content: ""; position: absolute; left: 75px; bottom: -3px; width: 7px; height: 7px; background: #e4e6f0; transform: rotate(45deg); }
  .trigger { position: absolute; left: 205px; top: 184px; width: 70px; height: 70px; border: 1.500px solid #c3c6d3; border-radius: 26px 5px 5px 26px; background: #414244; display: flex; align-items: center; padding-left: 22.500px; }
  .bolt { position: absolute; left: 182px; top: 212px; }
  .trigger-port { position: absolute; left: 269px; top: 213px; width: 12px; height: 12px; border-radius: 50%; background: #b3b6c2; }
  .trigger-name { position: absolute; left: 183px; top: 257px; font-size: 11.500px; line-height: 16px; font-weight: 500; color: #fff; }
  .flow { position: absolute; left: 1100px; top: 45px; width: 320px; height: 140px; }
  .flow.second { top: 322.500px; }
  .box { position: absolute; left: 169px; top: 0; width: 70px; height: 70px; border: 1.500px solid #c3c6d3; border-radius: 5px; background: #414244; display: flex; align-items: center; justify-content: center; }
  .box.cut { left: 7px; }
  .wire { position: absolute; left: 60px; top: 25px; }
  .port { position: absolute; left: 166px; top: 29px; width: 6px; height: 12px; background: #c3c6d3; }
  .knob { position: absolute; left: 232.500px; top: 29px; width: 11.500px; height: 11.500px; border-radius: 50%; background: #c3c6d3; }
  .add { position: absolute; left: 278px; top: 27px; width: 16px; height: 16px; border: 1.500px solid #c3c6d3; border-radius: 3px; display: flex; align-items: center; justify-content: center; }
  .label { position: absolute; left: 104px; width: 200px; top: 74px; display: flex; flex-direction: column; align-items: center; color: #fff; font-size: 11.450px; line-height: 14.300px; }
  .label.prev { left: -58px; }
  .label b { font-weight: 500; min-height: 14.300px; }
  .label small { margin-top: 2.500px; font-size: 9.300px; line-height: 14px; color: #a6a8b3; }
  .tools { position: absolute; left: 20px; top: 469px; display: flex; gap: 14.600px; }
  .side { position: absolute; right: 20px; top: 20px; display: flex; flex-direction: column; gap: 9.600px; }
  .tools button, .side button { width: 53px; height: 53px; border: 1px solid #e9eaf2; border-radius: 5px; color: #f0f1f7; display: flex; align-items: center; justify-content: center; }
  .tools button { padding-right: 1px; }
  .side button { width: 52px; }
  .logs { height: 42px; flex: none; border-top: 1px solid #555658; border-bottom: 1px solid #555658; display: flex; align-items: center; padding: 0 17px 1px 20px; font-size: 15px; }
  .logs b { color: #fff; font-weight: 600; margin-right: auto; }
  .logs span + span { margin-left: 16px; }

  /* taskbar */
  .taskbar { height: 60px; flex: none; position: relative; background: linear-gradient(90deg, #0c0c0c, #131313 35%, #1b1b1b 65%, #272727 78%, #272727); display: flex; }
  .grain { position: absolute; inset: 0; opacity: .16; }
  .apps { display: flex; margin-left: 548px; position: relative; }
  .appcell { width: 55.100px; display: flex; align-items: center; justify-content: center; position: relative; }
  .appcell:first-child { padding-right: 2px; }
  .overlay { position: absolute; }
  .appcell.open::after { content: ""; position: absolute; left: 23.500px; bottom: 6px; width: 8px; height: 4px; border-radius: 2px; background: #8f8f8f; }
  .appcell.current::before { content: ""; position: absolute; left: 3px; top: 5px; width: 44px; height: 50px; border-radius: 5px; background: #ffffff12; border: 1px solid #ffffff14; box-shadow: 5px 0 0 -1px #ffffff0a; }
  .appcell.current::after { content: ""; position: absolute; left: 16.500px; bottom: 6px; width: 20px; height: 4px; border-radius: 2px; background: #4cc2ff; }
  .appcell.current { padding-right: 2px; }
  .tray { margin-left: auto; margin-right: 24px; display: flex; align-items: center; color: #fff; font: 14.500px/20px "Open Sans", sans-serif; letter-spacing: .15px; position: relative; text-align: right; }
  .chev { margin-right: 22px; }
  .lang { width: 32px; text-align: center; margin-right: 22px; letter-spacing: -.2px; }
  .sig { margin-right: 16px; }
  .clock { width: 80px; }

  /* popup window */
  .window { position: absolute; left: 530px; top: 62px; width: 882px; height: 948px; border-radius: 9px; overflow: hidden; border: 1px solid #4a4c52; box-shadow: 0 12px 38px 4px rgba(0, 0, 0, .6); display: flex; flex-direction: column; }
  .caption { height: 36px; flex: none; background: #0a1a33; display: flex; align-items: center; padding-left: 5px; color: #fff; }
  .name { margin-left: 6px; font: 14.500px "Open Sans", sans-serif; letter-spacing: -.13px; }
  .ctl { margin-left: auto; margin-right: 22px; display: flex; gap: 43px; }
  .ctl svg { fill: none; stroke: #fff; stroke-width: 1.200; }
  .address { height: 42px; flex: none; background: #202124; border-top: 2px solid #14233b; border-bottom: 1px solid #2f4770; display: flex; align-items: center; padding: 0 13px 1px 10px; color: #e3e3e3; }
  .full { margin: -1px 0 0 17.500px; font: 17px "Open Sans", sans-serif; letter-spacing: -.3px; color: #fff; }
  .full i { font-style: normal; letter-spacing: -.07px; color: #85878b; }
  .bar { margin-left: auto; width: 1px; height: 20px; background: #8b8c90; margin-right: 14px; }
  .shield { position: relative; margin-right: 22px; }
  .shield b { position: absolute; left: 13px; top: -4px; width: 15px; height: 15px; border-radius: 8px; background: #5e6275; color: #fff; font: 9px/15px "Open Sans", sans-serif; text-align: center; }
  .view { flex: 1; display: flex; min-height: 0; }
  .page { width: 861px; background: #fbfcfe; display: flex; flex-direction: column; align-items: center; padding-top: 30px; overflow: hidden; position: relative; font-family: "Open Sans", sans-serif; }
  .test { width: 560px; height: 52px; flex: none; border: 1px solid #fadfb5; border-radius: 10px; background: #fffaf4; color: #e6a23d; font-size: 15px; line-height: 50px; padding-left: 30px; letter-spacing: 0; }
  .card { margin-top: 20px; width: 560px; height: 743px; flex: none; border: 1px solid #dbdfe7; border-radius: 10px; background: #fff; box-shadow: 0 5px 20px rgba(99, 77, 255, .06); padding: 28px 30px; display: flex; flex-direction: column; }
  h1 { margin: 0; font-weight: 400; font-size: 25px; line-height: 38px; text-align: center; color: #525356; }
  p { margin: 8px 0 30px; font-size: 17.500px; line-height: 24px; text-align: center; color: #7e8186; }
  .field { height: 123.100px; flex: none; }
  label { display: block; font-size: 17.500px; font-weight: 600; line-height: 24px; margin-bottom: 8px; color: #555; letter-spacing: -.07px; }
  label.plain { padding-top: 1px; margin-bottom: 7px; }
  label span { color: #ff6d5a; }
  input { display: block; width: 498px; height: 53px; border: 1px solid #dbdfe7; border-radius: 7px; padding: 0 15px; font: 17.500px "Liberation Sans", sans-serif; outline: 0; background: #fff; }
  input::placeholder { color: #bbb; opacity: 1; }
  .card button { height: 60px; flex: none; margin-top: 30.600px; border-radius: 6px; background: #ff6d5a; color: #fff; font-size: 17.500px; font-weight: 600; }
  .pink { position: absolute; left: 507px; bottom: -5px; width: 9px; height: 9px; border-radius: 50%; background: #ea4b71; }
  .scroll { flex: 1; background: #2b2b2b; display: flex; flex-direction: column; align-items: center; padding: 7px 1px 4px 0; }
  .up, .dn { border: 6px solid transparent; border-top: 0; border-bottom: 9px solid #9f9f9f; height: 0; width: 0; }
  .dn { transform: rotate(180deg); margin-top: auto; }
  .thumb { width: 11px; height: 778px; border-radius: 6px; background: #9f9f9f; margin-top: 7px; }
</style>
